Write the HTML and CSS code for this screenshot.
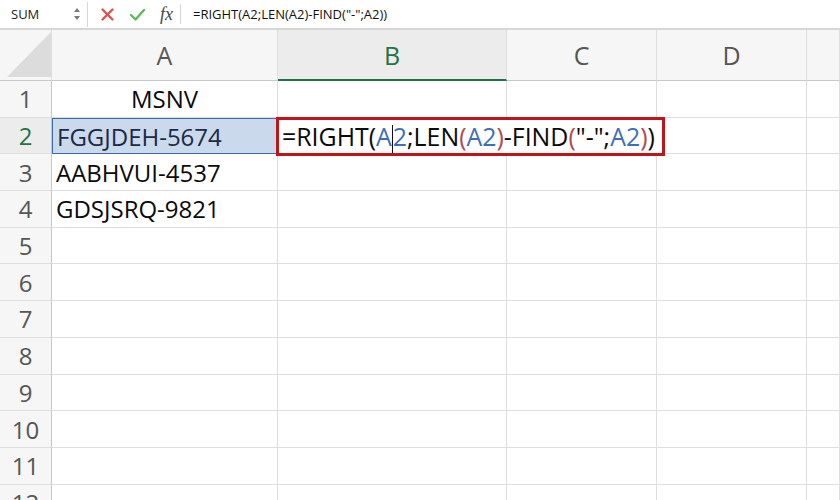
FILE: index.html
```html
<!DOCTYPE html>
<html lang="vi">
<head>
    <meta charset="UTF-8">
    <title>RIGHT - Excel</title>
    <link rel="stylesheet" href="styles.css">
</head>
<body>
    <div class="formula-bar">
        <div class="name-box">
            <span>SUM</span>
            <span class="spin">
                <svg width="8" height="16" viewBox="0 0 8 16"><path d="M1 6 L4 2 L7 6 Z M1 10 L4 14 L7 10 Z" fill="#777"/></svg>
            </span>
        </div>
        <div class="bar-buttons">
            <svg class="btn-cancel" width="15" height="15" viewBox="0 0 15 15"><path d="M2.5 2.5 L12.5 12.5 M12.5 2.5 L2.5 12.5" stroke="#d9534f" stroke-width="2.4" stroke-linecap="round"/></svg>
            <svg class="btn-ok" width="17" height="15" viewBox="0 0 17 15"><path d="M2 8 L6.5 12.5 L15 3" stroke="#5cb85c" stroke-width="2.4" fill="none" stroke-linecap="round" stroke-linejoin="round"/></svg>
            <span class="fx">fx</span>
        </div>
        <div class="formula-text">=RIGHT(A2;LEN(A2)-FIND("-";A2))</div>
    </div>

    <div class="sheet">
        <div class="corner"><div class="corner-tri"></div></div>
        <div class="col-head">A</div>
        <div class="col-head active">B</div>
        <div class="col-head">C</div>
        <div class="col-head">D</div>
        <div class="col-head"></div>

        <div class="row-head">1</div>
        <div class="cell center">MSNV</div>
        <div class="cell"></div><div class="cell"></div><div class="cell"></div><div class="cell"></div>

        <div class="row-head active">2</div>
        <div class="cell selected">FGGJDEH-5674</div>
        <div class="cell editing">
            <div class="editor">=RIGHT(<span class="ref-blue">A<span class="caret"></span>2</span>;LEN<span class="ref-red">(</span><span class="ref-blue">A2</span><span class="ref-red">)</span>-FIND<span class="ref-red">(</span>"-";<span class="ref-blue">A2</span><span class="ref-red">)</span>)</div>
        </div>
        <div class="cell"></div><div class="cell"></div><div class="cell"></div>

        <div class="row-head">3</div>
        <div class="cell">AABHVUI-4537</div>
        <div class="cell"></div><div class="cell"></div><div class="cell"></div><div class="cell"></div>

        <div class="row-head">4</div>
        <div class="cell">GDSJSRQ-9821</div>
        <div class="cell"></div><div class="cell"></div><div class="cell"></div><div class="cell"></div>

        <div class="row-head">5</div>
        <div class="cell"></div><div class="cell"></div><div class="cell"></div><div class="cell"></div><div class="cell"></div>
        <div class="row-head">6</div>
        <div class="cell"></div><div class="cell"></div><div class="cell"></div><div class="cell"></div><div class="cell"></div>
        <div class="row-head">7</div>
        <div class="cell"></div><div class="cell"></div><div class="cell"></div><div class="cell"></div><div class="cell"></div>
        <div class="row-head">8</div>
        <div class="cell"></div><div class="cell"></div><div class="cell"></div><div class="cell"></div><div class="cell"></div>
        <div class="row-head">9</div>
        <div class="cell"></div><div class="cell"></div><div class="cell"></div><div class="cell"></div><div class="cell"></div>
        <div class="row-head">10</div>
        <div class="cell"></div><div class="cell"></div><div class="cell"></div><div class="cell"></div><div class="cell"></div>
        <div class="row-head">11</div>
        <div class="cell"></div><div class="cell"></div><div class="cell"></div><div class="cell"></div><div class="cell"></div>
        <div class="row-head">12</div>
        <div class="cell"></div><div class="cell"></div><div class="cell"></div><div class="cell"></div><div class="cell"></div>
    </div>
</body>
</html>
```

FILE: styles.css
```css
body {
    margin: 0;
    width: 840px;
    height: 500px;
    overflow: hidden;
    background: #fff;
    font-family: 'Open Sans', 'Liberation Sans', sans-serif;
    color: #0a0a0a;
}
.formula-bar {
    height: 28px;
    display: flex;
    align-items: center;
    border-bottom: 2px solid #d6d6d6;
    background: #fff;
    font-size: 13px;
}
.name-box {
    width: 88px;
    height: 25px;
    box-sizing: border-box;
    display: flex;
    align-items: center;
    justify-content: space-between;
    padding: 0 6px 0 11px;
    border-right: 1px solid #d8d8d8;
    color: #222;
}
.spin {
    display: flex;
}
.bar-buttons {
    display: flex;
    align-items: center;
    gap: 14px;
    padding-left: 12px;
    width: 98px;
    box-sizing: border-box;
}
.fx {
    font-family: 'Liberation Serif', serif;
    font-style: italic;
    font-size: 18px;
    color: #444;
    padding-right: 7px;
    border-right: 1px solid #d8d8d8;
    line-height: 20px;
}
.formula-text {
    padding-left: 7px;
    color: #111;
}
.sheet {
    display: grid;
    grid-template-columns: 52px 226px 229px 150px 150px 1fr;
    grid-template-rows: 51px;
    grid-auto-rows: 36.7px;
    font-size: 24px;
}
.corner, .col-head {
    background: #f6f6f6;
    border-right: 1px solid #dedede;
    border-bottom: 1px solid #c8c8c8;
}
.corner {
    position: relative;
}
.corner-tri {
    position: absolute;
    left: 7px;
    bottom: 3px;
    width: 0;
    height: 0;
    border-left: 44px solid transparent;
    border-bottom: 45px solid #dcdcdc;
}
.col-head {
    display: flex;
    align-items: center;
    justify-content: center;
    color: #555;
    font-size: 25px;
}
.col-head.active {
    background: #ececec;
    color: #217346;
    border-bottom: 2px solid #217346;
}
.row-head {
    background: #f6f6f6;
    border-right: 1px solid #c8c8c8;
    border-bottom: 1px solid #dedede;
    display: flex;
    align-items: center;
    justify-content: center;
    color: #555;
}
.row-head.active {
    color: #217346;
    background: #ececec;
}
.cell {
    border-right: 1px solid #dedede;
    border-bottom: 1px solid #dedede;
    display: flex;
    align-items: center;
    padding-left: 4px;
    white-space: nowrap;
    overflow: visible;
    min-width: 0;
}
.cell.center {
    justify-content: center;
    padding-left: 0;
}
.cell.selected {
    background: #cbd9ed;
    border: 1.5px solid #3c6bab;
    color: #1a2a44;
}
.cell.editing {
    position: relative;
    padding: 0;
}
.editor {
    position: absolute;
    left: -2px;
    top: -1px;
    width: 389px;
    height: 39px;
    box-sizing: border-box;
    border: 3px solid #c0141b;
    background: #fff;
    padding-left: 3px;
    display: flex;
    align-items: center;
    font-size: 24.9px;
    z-index: 2;
}
.ref-blue {
    color: #3d6eb7;
}
.ref-red {
    color: #b24a4a;
}
.caret {
    display: inline-block;
    width: 1px;
    height: 28px;
    background: #111;
    vertical-align: middle;
}
```
